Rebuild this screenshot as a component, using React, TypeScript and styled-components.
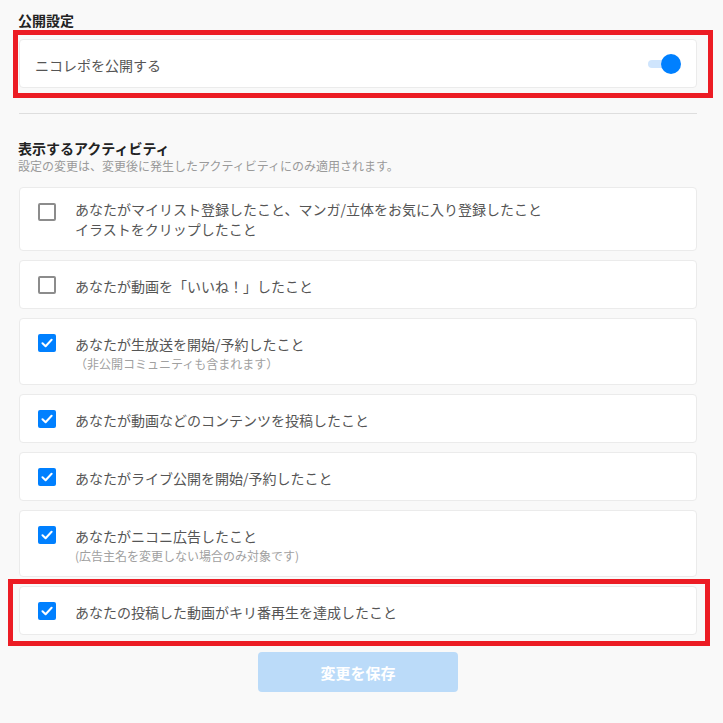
import React from "react";
import styled, { createGlobalStyle } from "styled-components";

const GlobalStyle = createGlobalStyle`
  html, body { margin: 0; padding: 0; background: #f9f9f9; }
  body {
    font-family: "Noto Sans CJK JP", "Noto Sans", sans-serif;
    color: #555;
  }
`;

const Page = styled.div`
  padding: 10px 26px 30px 19px;
  display: flex;
  flex-direction: column;
`;

const Heading = styled.h2<{ $mt?: number }>`
  margin: ${(p) => p.$mt ?? 0}px 0 0 -1px;
  font-size: 14px;
  line-height: 20px;
  font-weight: 700;
  color: #222;
`;

const Note = styled.p`
  margin: 0 0 13px -1px;
  font-size: 12px;
  line-height: 16px;
  color: #9a9a9a;
`;

const Highlight = styled.div<{ $t: number; $r: number; $b: number; $l: number; $mt?: number }>`
  position: relative;
  margin-top: ${(p) => p.$mt ?? 0}px;
  &::after {
    content: "";
    position: absolute;
    top: -${(p) => p.$t}px;
    right: -${(p) => p.$r}px;
    bottom: -${(p) => p.$b}px;
    left: -${(p) => p.$l}px;
    border: 5px solid #ec1c24;
    pointer-events: none;
  }
`;

const PublishCard = styled.div`
  height: 49px;
  box-sizing: border-box;
  background: #fff;
  border: 1px solid #ebebeb;
  border-radius: 4px;
  display: flex;
  align-items: center;
  justify-content: space-between;
  padding: 0 15px 0 15px;
  font-size: 14px;
  color: #555;
`;

const PublishLabel = styled.span`
  line-height: 20px;
  margin-top: 2px;
`;

const Switch = styled.span`
  position: relative;
  width: 33px;
  height: 20px;
  display: block;
  &::before {
    content: "";
    position: absolute;
    left: 0;
    top: 6px;
    width: 28px;
    height: 8px;
    border-radius: 4px;
    background: #cfe5fd;
  }
  &::after {
    content: "";
    position: absolute;
    right: 0;
    top: 0;
    width: 20px;
    height: 20px;
    border-radius: 50%;
    background: #0080ff;
  }
`;

const Divider = styled.hr`
  margin: 25px 0 0;
  border: 0;
  border-top: 1px solid #dedede;
`;

const List = styled.div`
  display: flex;
  flex-direction: column;
  gap: 9px;
`;

const ItemCard = styled.label`
  display: flex;
  align-items: flex-start;
  gap: 19px;
  background: #fff;
  border: 1px solid #ebebeb;
  border-radius: 4px;
  padding: 12px 0 11px 18px;
  cursor: pointer;
`;

const BoxWrap = styled.span`
  display: block;
  padding: 3px 0;
  flex: none;
`;

const Box = styled.span<{ $checked: boolean }>`
  display: flex;
  align-items: center;
  justify-content: center;
  box-sizing: border-box;
  width: 18px;
  height: 18px;
  border-radius: 2px;
  background: ${(p) => (p.$checked ? "#0080ff" : "#fff")};
  border: ${(p) => (p.$checked ? "none" : "2px solid #8c8c8c")};
`;

const TextBlock = styled.span<{ $multi?: boolean }>`
  display: block;
  padding-top: ${(p) => (p.$multi ? 0 : 3)}px;
  font-size: 14px;
  line-height: ${(p) => (p.$multi ? "19.5px" : "20px")};
  color: #555;
`;

const SubText = styled.span`
  display: block;
  font-size: 12px;
  line-height: 19px;
  color: #a0a0a0;
`;

const SaveButton = styled.button`
  align-self: center;
  margin-top: 17px;
  width: 200px;
  height: 40px;
  border: 0;
  border-radius: 4px;
  background: #bbdbf9;
  color: #fff;
  font-family: inherit;
  font-size: 15px;
  font-weight: 700;
  cursor: default;
`;

const Check = () => (
  <svg width="12" height="10" viewBox="0 0 12 10" aria-hidden>
    <path d="M1.5 5.2 L4.6 8.2 L10.6 1.8" fill="none" stroke="#fff" strokeWidth="2" strokeLinecap="round" strokeLinejoin="round" />
  </svg>
);

type Item = { lines: string[]; sub?: string; checked: boolean; highlight?: boolean };

const items: Item[] = [
  { lines: ["あなたがマイリスト登録したこと、マンガ/立体をお気に入り登録したこと", "イラストをクリップしたこと"], checked: false },
  { lines: ["あなたが動画を「いいね！」したこと"], checked: false },
  { lines: ["あなたが生放送を開始/予約したこと"], sub: "（非公開コミュニティも含まれます）", checked: true },
  { lines: ["あなたが動画などのコンテンツを投稿したこと"], checked: true },
  { lines: ["あなたがライブ公開を開始/予約したこと"], checked: true },
  { lines: ["あなたがニコニ広告したこと"], sub: "(広告主名を変更しない場合のみ対象です)", checked: true },
  { lines: ["あなたの投稿した動画がキリ番再生を達成したこと"], checked: true, highlight: true },
];

const ItemRow = ({ item }: { item: Item }) => (
  <ItemCard>
    <BoxWrap>
      <Box $checked={item.checked}>{item.checked && <Check />}</Box>
    </BoxWrap>
    <TextBlock $multi={item.lines.length > 1}>
      {item.lines.map((l, i) => (
        <React.Fragment key={i}>
          {i > 0 && <br />}
          {l}
        </React.Fragment>
      ))}
      {item.sub && <SubText>{item.sub}</SubText>}
    </TextBlock>
  </ItemCard>
);

export default function App() {
  return (
    <>
      <GlobalStyle />
      <Page>
        <Heading>公開設定</Heading>
        <Highlight $mt={9} $t={9} $r={16} $b={10} $l={6}>
          <PublishCard>
            <PublishLabel>ニコレポを公開する</PublishLabel>
            <Switch />
          </PublishCard>
        </Highlight>
        <Divider />
        <Heading $mt={24}>表示するアクティビティ</Heading>
        <Note>設定の変更は、変更後に発生したアクティビティにのみ適用されます。</Note>
        <List>
          {items.map((it, i) =>
            it.highlight ? (
              <Highlight key={i} $t={7} $r={13} $b={11} $l={11}>
                <ItemRow item={it} />
              </Highlight>
            ) : (
              <ItemRow key={i} item={it} />
            )
          )}
        </List>
        <SaveButton>変更を保存</SaveButton>
      </Page>
    </>
  );
}
